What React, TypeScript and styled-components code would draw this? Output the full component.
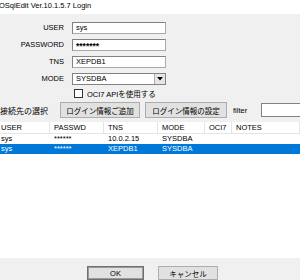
import React from "react";
import styled, { createGlobalStyle } from "styled-components";

const GlobalStyle = createGlobalStyle`
  html, body {
    margin: 0;
    padding: 0;
    background: #f0f0f0;
  }
  * {
    box-sizing: border-box;
  }
`;

const Window = styled.div`
  width: 300px;
  height: 280px;
  overflow: hidden;
  display: flex;
  flex-direction: column;
  background: #f0f0f0;
  font-family: "Liberation Sans", "Noto Sans CJK JP", sans-serif;
  font-size: 7.5px;
  color: #000;
`;

const TitleBar = styled.div`
  height: 14px;
  flex: 0 0 14px;
  background: #ffffff;
  line-height: 11px;
  margin-left: -1px;
  white-space: nowrap;
`;

const Form = styled.div`
  display: grid;
  grid-template-columns: 64px 94px;
  column-gap: 8px;
  row-gap: 5px;
  grid-auto-rows: 12px;
  padding-top: 8px;
  align-items: center;
`;

const Label = styled.div`
  text-align: right;
  line-height: 12px;
`;

const TextBox = styled.div<{ $secret?: boolean }>`
  height: 12px;
  background: #fff;
  border: 1px solid #a9a9a9;
  border-top-color: #828282;
  border-left-color: #828282;
  padding-left: 3px;
  line-height: ${(p) => (p.$secret ? 12 : 10)}px;
  font-size: ${(p) => (p.$secret ? 8.5 : 7.5)}px;
  font-weight: ${(p) => (p.$secret ? "bold" : "normal")};
  white-space: nowrap;
  overflow: hidden;
`;

const Select = styled.div`
  height: 12px;
  background: #fff;
  border: 1px solid #828282;
  display: flex;
  align-items: stretch;
`;

const SelectValue = styled.div`
  flex: 1;
  padding-left: 3px;
  line-height: 10px;
`;

const SelectArrow = styled.div`
  width: 11px;
  background: #e6e6e6;
  border-left: 1px solid #adadad;
  display: flex;
  align-items: center;
  justify-content: center;
`;

const CheckRow = styled.label`
  display: flex;
  align-items: center;
  gap: 4px;
  margin-left: 74px;
  margin-top: 2px;
  height: 12px;
`;

const CheckBox = styled.span`
  width: 9px;
  height: 9px;
  background: #fff;
  border: 1px solid #333;
`;

const Toolbar = styled.div`
  display: flex;
  align-items: center;
  height: 16px;
  margin-top: 3px;
`;

const ToolLabel = styled.div`
  width: 60px;
  flex: 0 0 60px;
  font-size: 8px;
  white-space: nowrap;
`;

const Button = styled.div<{ $width: number; $default?: boolean }>`
  width: ${(p) => p.$width}px;
  flex: 0 0 ${(p) => p.$width}px;
  height: 16px;
  background: #e1e1e1;
  border: 1px solid ${(p) => (p.$default ? "#6f6f6f" : "#adadad")};
  box-shadow: ${(p) => (p.$default ? "inset 0 0 0 1px #9a9a9a" : "none")};
  display: flex;
  align-items: center;
  justify-content: center;
  white-space: nowrap;
`;

const FilterLabel = styled.div`
  margin-left: 6px;
  width: 28px;
  flex: 0 0 28px;
`;

const FilterInput = styled.div`
  flex: 0 0 60px;
  height: 14px;
  background: #fff;
  border: 1px solid #828282;
`;

const List = styled.div`
  flex: 1;
  margin-top: 4px;
  background: #fff;
  overflow: hidden;
`;

const GridRow = styled.div<{ $header?: boolean; $selected?: boolean }>`
  display: grid;
  grid-template-columns: 50px 54px 54px 47px 27px 1fr;
  height: ${(p) => (p.$header ? 12 : 10)}px;
  line-height: ${(p) => (p.$header ? 11 : 10)}px;
  background: ${(p) => (p.$selected ? "#0078d7" : "#fff")};
  color: ${(p) => (p.$selected ? "#fff" : "#000")};
  border-bottom: ${(p) => (p.$header ? "1px solid #e5e5e5" : "none")};
`;

const Cell = styled.div<{ $header?: boolean; $first?: boolean }>`
  padding-left: ${(p) => (p.$first ? 1 : 4)}px;
  border-right: ${(p) => (p.$header ? "1px solid #e5e5e5" : "none")};
  white-space: nowrap;
  overflow: hidden;
`;

const Footer = styled.div`
  flex: 0 0 22px;
  display: flex;
  justify-content: center;
  gap: 14px;
  padding-top: 8px;
  padding-left: 5px;
`;

const FooterButton = styled(Button)`
  height: 14px;
`;

const columns = ["USER", "PASSWD", "TNS", "MODE", "OCI7", "NOTES"];

const rows = [
  { user: "sys", pass: "******", tns: "10.0.2.15", mode: "SYSDBA", selected: false },
  { user: "sys", pass: "******", tns: "XEPDB1", mode: "SYSDBA", selected: true },
];

export default function App() {
  return (
    <Window>
      <GlobalStyle />
      <TitleBar>OSqlEdit Ver.10.1.5.7 Login</TitleBar>
      <Form>
        <Label>USER</Label>
        <TextBox>sys</TextBox>
        <Label>PASSWORD</Label>
        <TextBox $secret>*******</TextBox>
        <Label>TNS</Label>
        <TextBox>XEPDB1</TextBox>
        <Label>MODE</Label>
        <Select>
          <SelectValue>SYSDBA</SelectValue>
          <SelectArrow>
            <svg width="6" height="4" viewBox="0 0 6 4">
              <path d="M0 0H6L3 3.5Z" fill="#000" />
            </svg>
          </SelectArrow>
        </Select>
      </Form>
      <CheckRow>
        <CheckBox />
        <span>OCI7 APIを使用する</span>
      </CheckRow>
      <Toolbar>
        <ToolLabel>接続先の選択</ToolLabel>
        <Button $width={80}>ログイン情報ご追加</Button>
        <Button $width={82} style={{ marginLeft: 5 }}>
          ログイン情報の設定
        </Button>
        <FilterLabel>filter</FilterLabel>
        <FilterInput />
      </Toolbar>
      <List>
        <GridRow $header>
          {columns.map((c, i) => (
            <Cell key={c} $header $first={i === 0}>
              {c}
            </Cell>
          ))}
        </GridRow>
        {rows.map((r, i) => (
          <GridRow key={i} $selected={r.selected}>
            <Cell $first>{r.user}</Cell>
            <Cell>{r.pass}</Cell>
            <Cell>{r.tns}</Cell>
            <Cell>{r.mode}</Cell>
            <Cell />
            <Cell />
          </GridRow>
        ))}
      </List>
      <Footer>
        <FooterButton $width={57} $default>
          OK
        </FooterButton>
        <FooterButton $width={60}>キャンセル</FooterButton>
      </Footer>
    </Window>
  );
}
